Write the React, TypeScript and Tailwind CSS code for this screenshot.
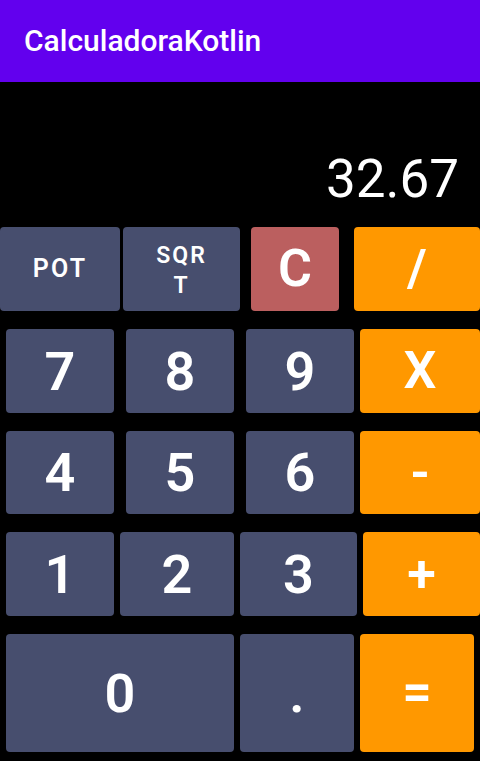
import React from "react";

const base = "flex items-center justify-center rounded-[4px] text-white font-semibold shrink-0";
const dark = "bg-[#474e6e]";
const orange = "bg-[#ff9800]";

export default function App() {
  return (
    <div className="w-[480px] h-[761px] bg-black flex flex-col overflow-hidden" style={{ fontFamily: "Roboto, 'Noto Sans', sans-serif" }}>
      <div className="h-[82px] bg-[#6200ee] flex items-center pl-[24px] shrink-0">
        <span className="text-white text-[30px] font-medium leading-none">CalculadoraKotlin</span>
      </div>
      <div className="h-[145px] flex items-end justify-end pr-[21px] pb-[21px] shrink-0">
        <span className="text-white text-[53px] leading-none">32.67</span>
      </div>
      <div className="flex h-[84px] shrink-0">
        <div className={`${base} ${dark} w-[120px] text-[25px] font-medium tracking-[0.09em]`}>POT</div>
        <div className={`${base} ${dark} ml-[3px] w-[117px] text-[23px] font-medium tracking-[0.09em] leading-[30px] text-center pt-[4px]`}>SQR<br />T</div>
        <div className={`${base} bg-[#bb5f5f] ml-[11px] w-[88px] text-[52px]`}>C</div>
        <div className={`${base} ${orange} ml-[15px] w-[126px] text-[52px]`}>/</div>
      </div>
      <div className="flex h-[84px] mt-[18px] shrink-0">
        <div className={`${base} ${dark} ml-[6px] w-[108px] text-[54px]`}>7</div>
        <div className={`${base} ${dark} ml-[12px] w-[108px] text-[54px]`}>8</div>
        <div className={`${base} ${dark} ml-[12px] w-[108px] text-[54px]`}>9</div>
        <div className={`${base} ${orange} ml-[6px] w-[120px] text-[52px]`}>X</div>
      </div>
      <div className="flex h-[83px] mt-[18px] shrink-0">
        <div className={`${base} ${dark} ml-[6px] w-[108px] text-[54px]`}>4</div>
        <div className={`${base} ${dark} ml-[12px] w-[108px] text-[54px]`}>5</div>
        <div className={`${base} ${dark} ml-[12px] w-[108px] text-[54px]`}>6</div>
        <div className={`${base} ${orange} ml-[6px] w-[120px] text-[52px]`}>-</div>
      </div>
      <div className="flex h-[84px] mt-[18px] shrink-0">
        <div className={`${base} ${dark} ml-[6px] w-[108px] text-[54px]`}>1</div>
        <div className={`${base} ${dark} ml-[6px] w-[114px] text-[54px]`}>2</div>
        <div className={`${base} ${dark} ml-[6px] w-[117px] text-[54px]`}>3</div>
        <div className={`${base} ${orange} ml-[6px] w-[117px] text-[52px]`}>+</div>
      </div>
      <div className="flex h-[118px] mt-[18px] shrink-0">
        <div className={`${base} ${dark} ml-[6px] w-[228px] text-[54px]`}>0</div>
        <div className={`${base} ${dark} ml-[6px] w-[114px] text-[54px]`}>.</div>
        <div className={`${base} ${orange} ml-[6px] w-[114px] text-[52px]`}>=</div>
      </div>
    </div>
  );
}
